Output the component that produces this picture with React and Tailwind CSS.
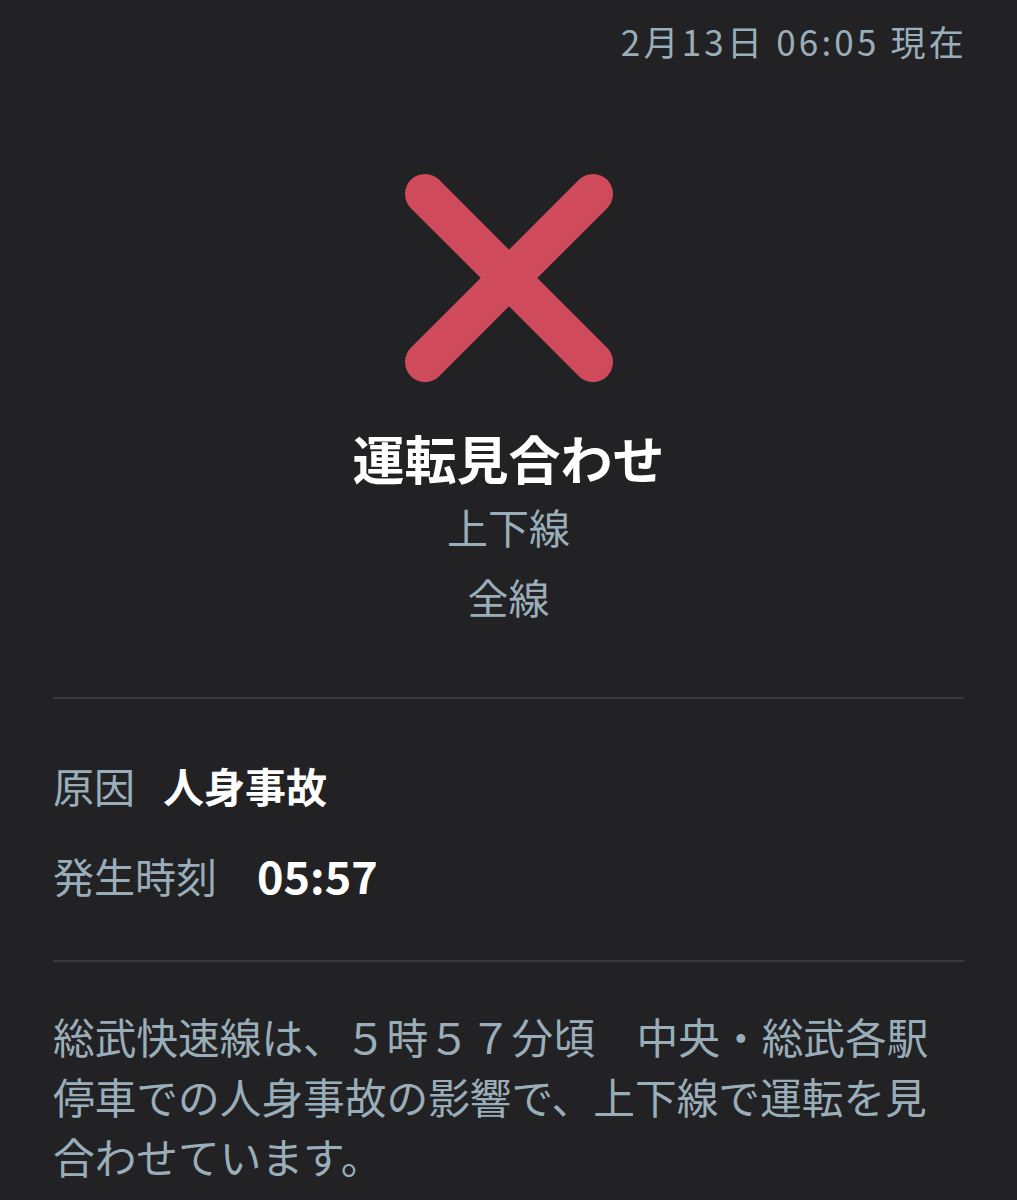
export default function App() {
  const font = { fontFamily: '"Noto Sans CJK JP", "Noto Sans", sans-serif' };
  return (
    <div className="w-[1017px] h-[1200px] bg-[#222224] overflow-hidden" style={font}>
      <div className="px-[53px] pt-[17px]">
        <div className="text-right text-[35px] leading-[48px] tracking-[3.2px] mr-[-3px] text-[#9aaeba]">2月13日 06:05 現在</div>
        <div className="flex justify-center mt-[109px]">
          <svg width="208" height="208" viewBox="0 0 208 208">
            <path d="M20 20 L188 188 M188 20 L20 188" stroke="#cf4b5c" strokeWidth="40" strokeLinecap="round" fill="none" />
          </svg>
        </div>
        <div className="flex flex-col items-center mt-[44px]">
          <div className="text-[52px] leading-[64px] font-bold text-white">運転見合わせ</div>
          <div className="mt-[1px] text-[41px] leading-[70px] text-[#9aaeba]">上下線</div>
          <div className="text-[41px] leading-[70px] text-[#9aaeba]">全線</div>
        </div>
        <div className="mt-[66px] h-[2px] bg-[#39393b]" />
        <div className="mt-[56px] flex items-center text-[41px] leading-[60px]">
          <span className="text-[#9aaeba]">原因</span>
          <span className="ml-[28px] font-bold text-white">人身事故</span>
        </div>
        <div className="mt-[30px] flex items-center leading-[60px]">
          <span className="text-[41px] text-[#9aaeba]">発生時刻</span>
          <span className="ml-[40px] text-[45px] font-bold text-white">05:57</span>
        </div>
        <div className="mt-[55px] h-[2px] bg-[#39393b]" />
        <p className="mt-[44px] text-[41.7px] leading-[60px] text-[#9aaeba]">
          総武快速線は、５時５７分頃　中央・総武各駅停車での人身事故の影響で、上下線で運転を見合わせています。
        </p>
      </div>
    </div>
  );
}
